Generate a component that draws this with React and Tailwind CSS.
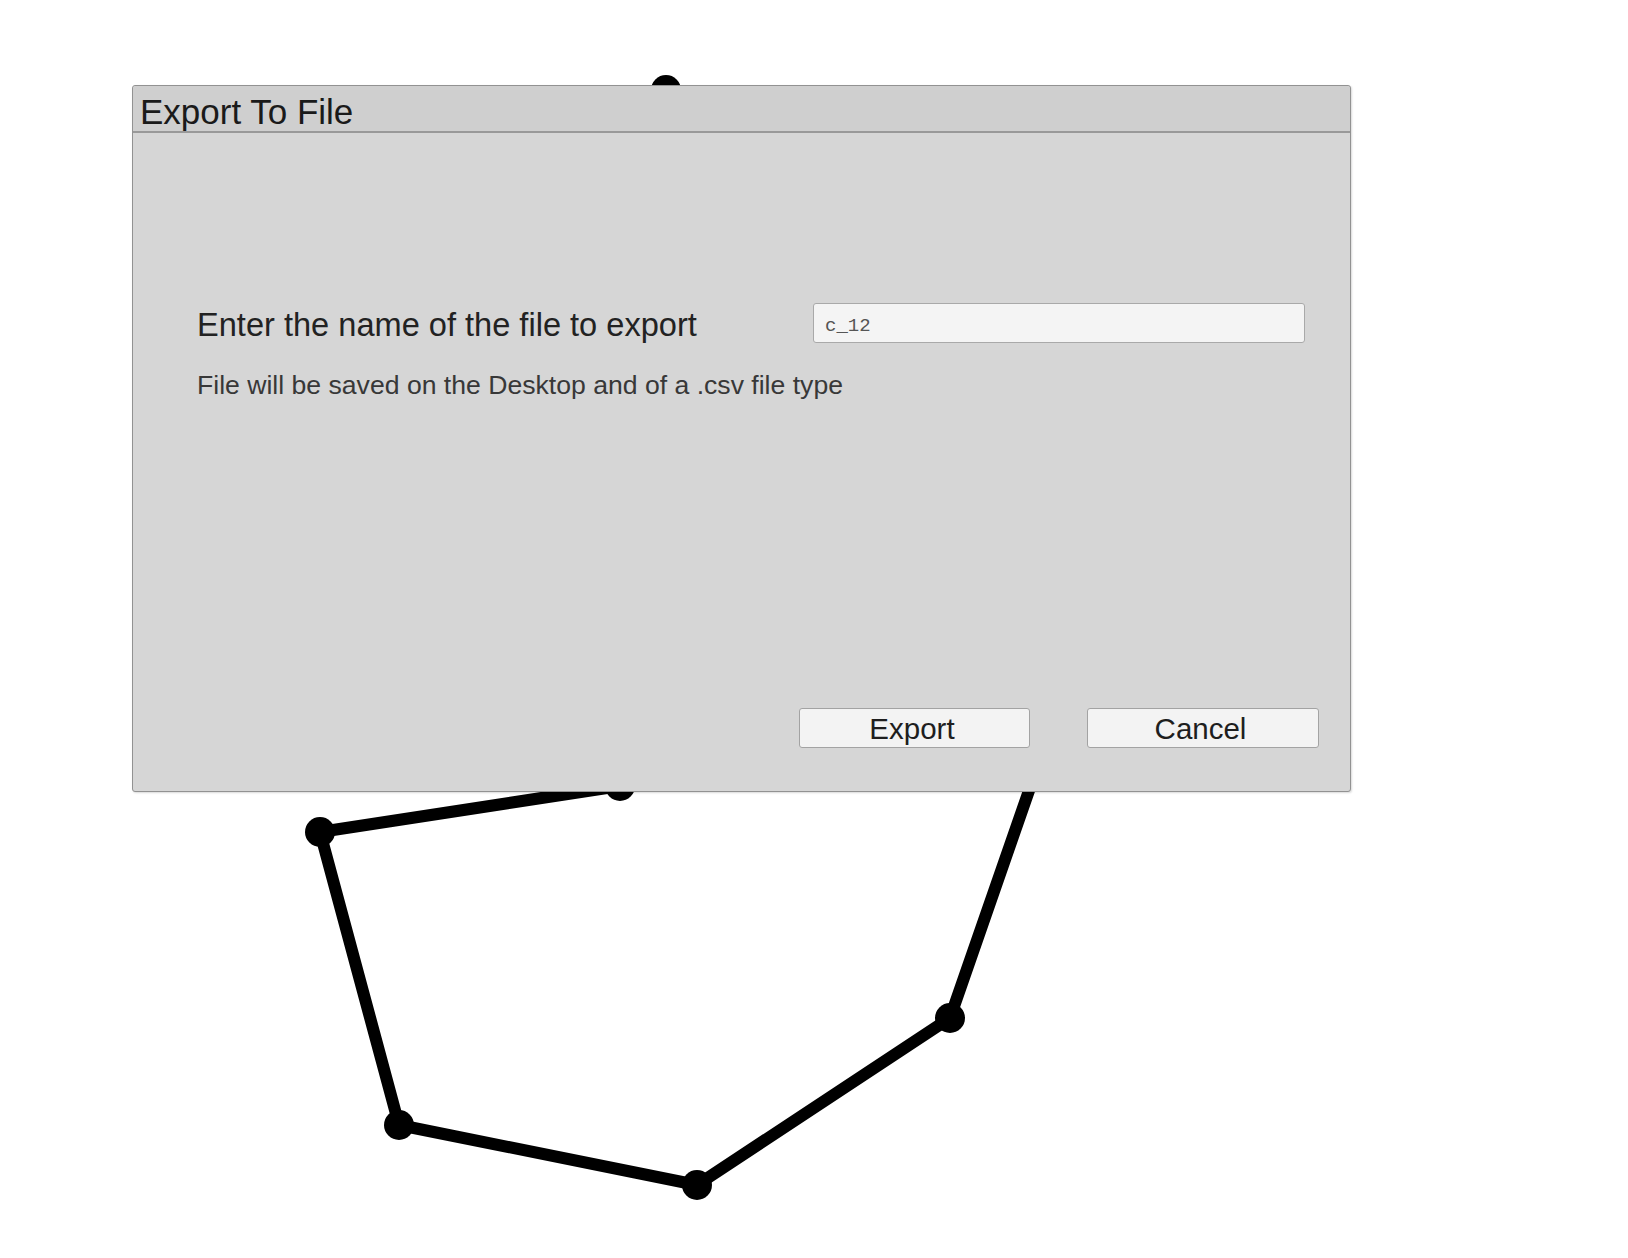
import React, { useState } from 'react';

// Polygon drawn on the canvas behind the dialog
const points = [
  [666, 90],
  [1130, 500],
  [950, 1018],
  [697, 1185],
  [399, 1125],
  [320, 832],
  [620, 786],
];

function Shape() {
  const d = points.map((p) => p.join(',')).join(' ');
  return (
    <svg className="absolute inset-0" width="1628" height="1258" viewBox="0 0 1628 1258">
      <polygon points={d} fill="none" stroke="#000" strokeWidth="12" strokeLinejoin="round" />
      {points.map(([x, y], i) => (
        <circle key={i} cx={x} cy={y} r="15" fill="#000" />
      ))}
    </svg>
  );
}

export default function App() {
  const [fileName, setFileName] = useState('c_12');

  return (
    <div
      className="relative w-full h-[1258px] bg-white overflow-hidden"
      style={{ fontFamily: '"Liberation Sans", Arial, sans-serif' }}
    >
      <Shape />

      {/* Export dialog */}
      <div className="absolute left-[132px] top-[85px] w-[1219px] h-[707px] flex flex-col bg-[#d6d6d6] border border-[#929292] rounded-[3px] shadow-[1px_1px_2px_rgba(0,0,0,0.15)]">
        <div className="h-[47px] shrink-0 bg-[#cfcfcf] border-b-2 border-[#999999] rounded-t-[3px] pl-[7px] pt-[6px]">
          <h1 className="text-[35px] leading-[39px] text-[#1a1a1a]">Export To File</h1>
        </div>

        <div className="flex flex-col pl-[64px] pt-[170px]">
          <div className="flex items-center h-[40px]">
            <label className="w-[616px] shrink-0 text-[32.6px] leading-[40px] pt-[4px] text-[#222222]">
              Enter the name of the file to export
            </label>
            <input
              value={fileName}
              onChange={(e) => setFileName(e.target.value)}
              className="w-[492px] h-[40px] px-[11px] pt-[5px] bg-[#f4f4f4] border border-[#a9a9a9] rounded-[3px] text-[19px] text-[#555555] outline-none"
              style={{ fontFamily: '"Liberation Mono", monospace' }}
            />
          </div>
          <p className="mt-[27px] text-[26.6px] leading-[30px] text-[#383838]">
            File will be saved on the Desktop and of a .csv file type
          </p>
        </div>

        <div className="mt-auto flex justify-end gap-[57px] pr-[31px] pb-[43px]">
          <button className="w-[231px] h-[40px] pr-[5px] pt-[2px] bg-[#f3f3f3] border border-[#a3a3a3] rounded-[3px] text-[29.5px] leading-none text-[#1e1e1e]">
            Export
          </button>
          <button className="w-[232px] h-[40px] pr-[5px] pt-[2px] bg-[#f3f3f3] border border-[#a3a3a3] rounded-[3px] text-[29.5px] leading-none text-[#1e1e1e]">
            Cancel
          </button>
        </div>
      </div>
    </div>
  );
}
